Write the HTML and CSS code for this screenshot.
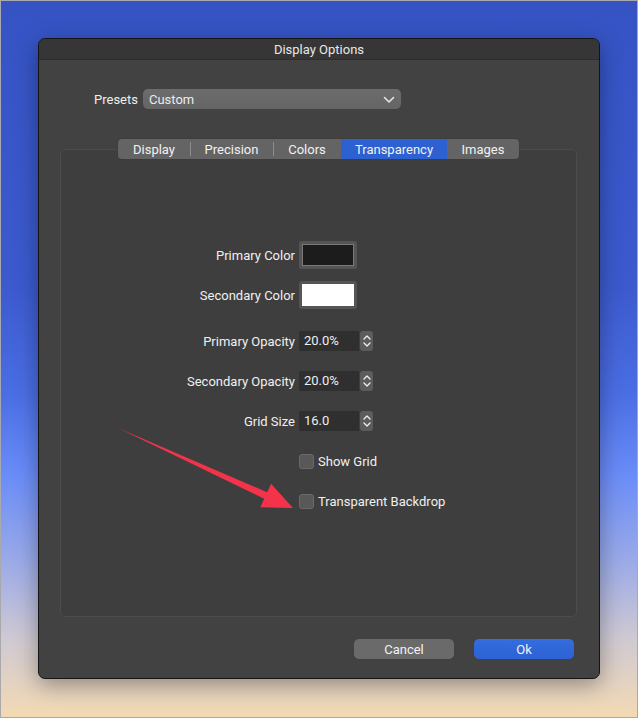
FILE: index.html
```html
<!DOCTYPE html>
<html lang="en">
  <head>
    <meta charset="UTF-8" />
    <title>Display Options</title>
    <link rel="stylesheet" href="styles.css">
  </head>
  <body>
    <div class="window">
      <div class="title-bar">Display Options</div>

      <div class="content">
        <div class="presets">
          <label for="presets">Presets</label>
          <div class="select" id="presets">
            <span>Custom</span>
            <svg class="chevron" width="12" height="8" viewBox="0 0 12 8">
              <path d="M1.5 1.5 L6 6 L10.5 1.5" fill="none" stroke="#e6e6e6" stroke-width="1.6" stroke-linecap="round" stroke-linejoin="round" />
            </svg>
          </div>
        </div>

        <div class="tabs">
          <div class="tab">Display</div>
          <div class="tab sep">Precision</div>
          <div class="tab sep">Colors</div>
          <div class="tab selected">Transparency</div>
          <div class="tab">Images</div>
        </div>

        <div class="panel">
          <div class="row swatch-row">
            <span class="label">Primary Color</span>
            <div class="swatch"><div class="swatch-fill dark"></div></div>
          </div>

          <div class="row swatch-row second">
            <span class="label">Secondary Color</span>
            <div class="swatch"><div class="swatch-fill light"></div></div>
          </div>

          <div class="row field-row">
            <span class="label">Primary Opacity</span>
            <div class="number-field">
              <div class="number-input">20.0%</div>
              <div class="stepper">
                <svg width="8" height="14" viewBox="0 0 8 14">
                  <path d="M1 5 L4 2 L7 5 M1 9 L4 12 L7 9" fill="none" stroke="#f0f0f0" stroke-width="1.3" stroke-linecap="round" stroke-linejoin="round" />
                </svg>
              </div>
            </div>
          </div>

          <div class="row field-row">
            <span class="label">Secondary Opacity</span>
            <div class="number-field">
              <div class="number-input">20.0%</div>
              <div class="stepper">
                <svg width="8" height="14" viewBox="0 0 8 14">
                  <path d="M1 5 L4 2 L7 5 M1 9 L4 12 L7 9" fill="none" stroke="#f0f0f0" stroke-width="1.3" stroke-linecap="round" stroke-linejoin="round" />
                </svg>
              </div>
            </div>
          </div>

          <div class="row field-row">
            <span class="label">Grid Size</span>
            <div class="number-field">
              <div class="number-input">16.0</div>
              <div class="stepper">
                <svg width="8" height="14" viewBox="0 0 8 14">
                  <path d="M1 5 L4 2 L7 5 M1 9 L4 12 L7 9" fill="none" stroke="#f0f0f0" stroke-width="1.3" stroke-linecap="round" stroke-linejoin="round" />
                </svg>
              </div>
            </div>
          </div>

          <div class="row check-row">
            <span class="label"></span>
            <label class="check"><span class="box"></span>Show Grid</label>
          </div>

          <div class="row check-row">
            <span class="label"></span>
            <label class="check"><span class="box"></span>Transparent Backdrop</label>
          </div>
        </div>

        <div class="buttons">
          <button class="btn">Cancel</button>
          <button class="btn primary">Ok</button>
        </div>
      </div>
    </div>

    <svg class="arrow" width="638" height="718" viewBox="0 0 638 718">
      <polygon points="117,427 266.2,491.3 270.1,482.7 292,507 259.3,506.3 263.2,497.7" fill="#f2334a" />
    </svg>
  </body>
</html>
```

FILE: styles.css
```css
* {
  margin: 0;
  padding: 0;
  box-sizing: border-box;
}

body {
  height: 718px;
  overflow: hidden;
  position: relative;
  border: 1px solid #a9a9ad;
  font-family: Roboto, "Liberation Sans", sans-serif;
  font-size: 13px;
  color: #f0f0f0;
  background: linear-gradient(
    to bottom,
    #3553c3 0%,
    #3c5ace 40%,
    #4b6ee4 55%,
    #6a8cf8 66%,
    #9aaae8 78%,
    #cfc9d2 89%,
    #f3dab3 100%
  );
}

.window {
  width: 562px;
  height: 641px;
  margin: 37px 0 0 37px;
  border: 1px solid #151515;
  border-radius: 7px;
  background: #424242;
  display: flex;
  flex-direction: column;
  overflow: hidden;
  box-shadow: 0 6px 22px rgba(0, 0, 0, 0.35);
}

.title-bar {
  height: 21px;
  flex-shrink: 0;
  background: #363636;
  border-bottom: 1px solid #2e2e2e;
  text-align: center;
  line-height: 22px;
  color: #e8e8e8;
}

.content {
  flex: 1;
  display: flex;
  flex-direction: column;
  padding: 29px 22px 19px 21px;
}

.presets {
  display: flex;
  align-items: center;
  padding-left: 34px;
  height: 20px;
}

.presets label {
  margin-right: 5px;
}

.select {
  width: 258px;
  height: 20px;
  border-radius: 5px;
  background: linear-gradient(to bottom, #6c6c6c, #656565);
  display: flex;
  align-items: center;
  justify-content: space-between;
  padding: 0 6px 0 6px;
  color: #ececec;
}

.chevron {
  margin-top: 1px;
}

.tabs {
  display: flex;
  align-self: center;
  margin: 30px 0 -10px 0;
  height: 20px;
  border-radius: 4px;
  background: #646464;
  overflow: hidden;
  position: relative;
  z-index: 1;
  box-shadow: 0 0 0 0.5px #3a3a3a;
}

.tab {
  display: flex;
  align-items: center;
  justify-content: center;
  position: relative;
  color: #f2f2f2;
}

.tab:nth-child(1) { width: 72px; }
.tab:nth-child(2) { width: 83px; }
.tab:nth-child(3) { width: 68px; }
.tab:nth-child(4) { width: 106px; }
.tab:nth-child(5) { width: 72px; }

.tab.sep::before {
  content: "";
  position: absolute;
  left: 0;
  top: 3px;
  height: 14px;
  width: 1px;
  background: #8c8c8c;
}

.tab.selected {
  background: #2d60d1;
}

.panel {
  flex: 1;
  border: 1px solid #4c4c4c;
  border-radius: 5px;
  background: #3e3e3e;
  padding-top: 91px;
}

.row {
  display: flex;
  align-items: center;
  height: 20px;
  margin-bottom: 20px;
}

.label {
  width: 238px;
  text-align: right;
  padding-right: 4px;
  flex-shrink: 0;
}

.swatch-row {
  height: 28px;
  margin-bottom: 12px;
}

.swatch-row.second {
  margin-bottom: 22px;
}

.swatch {
  width: 58px;
  height: 28px;
  border-radius: 3px;
  background: #555555;
  padding: 3px;
}

.swatch-fill {
  width: 100%;
  height: 100%;
  border: 1px solid #7a7a7a;
}

.swatch-fill.dark {
  background: #1c1c1c;
}

.swatch-fill.light {
  background: #ffffff;
  border-color: #ffffff;
}

.number-field {
  display: flex;
  align-items: center;
  height: 20px;
}

.number-input {
  width: 60px;
  height: 20px;
  background: #2f2f2f;
  padding-left: 5px;
  line-height: 20px;
  color: #f0f0f0;
}

.stepper {
  width: 13px;
  height: 20px;
  margin-left: 1px;
  border-radius: 3px;
  background: #5c5c5c;
  display: flex;
  align-items: center;
  justify-content: center;
}

.check-row {
  margin-bottom: 20px;
}

.check {
  display: flex;
  align-items: center;
}

.box {
  width: 15px;
  height: 15px;
  border-radius: 3px;
  background: #585858;
  border: 1px solid #6a6a6a;
  margin-right: 4px;
}

.buttons {
  display: flex;
  justify-content: flex-end;
  gap: 20px;
  margin-top: 22px;
  padding-right: 3px;
}

.btn {
  width: 100px;
  height: 20px;
  border: none;
  border-radius: 5px;
  background: #6a6a6a;
  color: #f2f2f2;
  font-family: Roboto, "Liberation Sans", sans-serif;
  font-size: 13px;
}

.btn.primary {
  background: linear-gradient(to bottom, #356cde, #2c62d3);
}

.arrow {
  position: absolute;
  top: 0;
  left: 0;
  pointer-events: none;
}
```
